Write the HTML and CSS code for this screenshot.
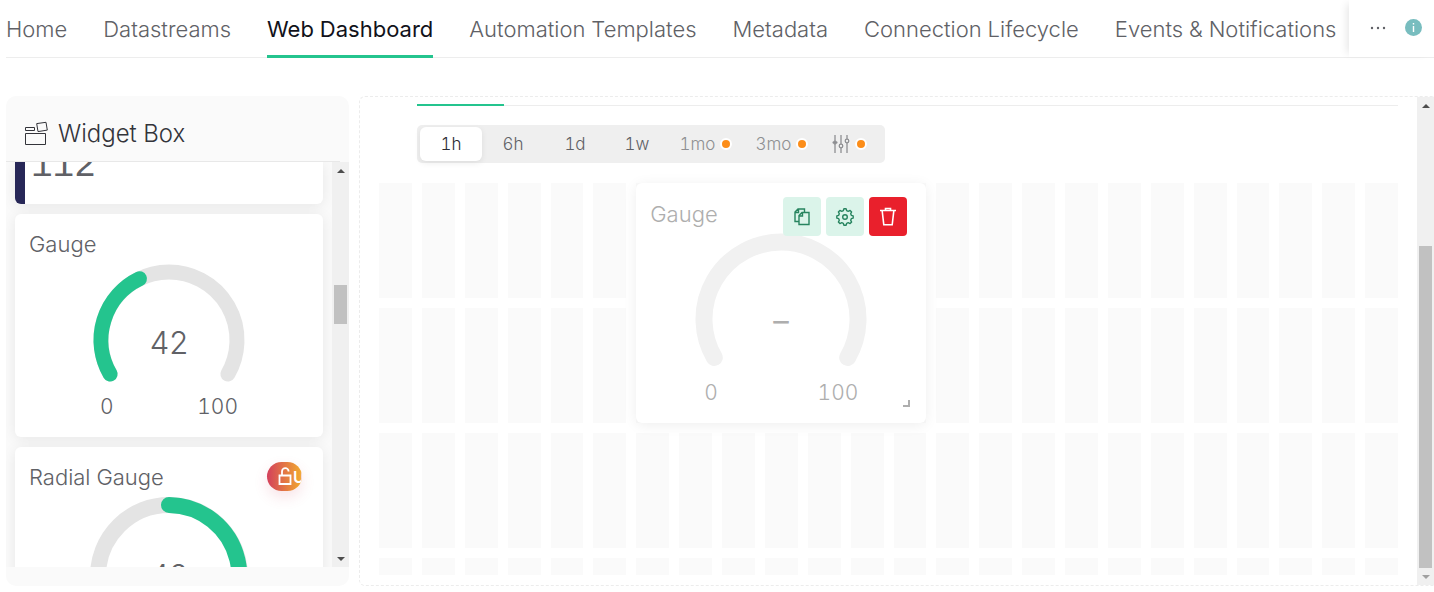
FILE: index.html
```html
<!DOCTYPE html>
<html lang="en">
<head>
<meta charset="utf-8">
<title>Web Dashboard</title>
<link rel="stylesheet" href="styles.css">
</head>
<body>
<div class="page">
  <header class="topbar">
    <nav class="tabs">
      <a class="tab" href="#">Home</a>
      <a class="tab" href="#">Datastreams</a>
      <a class="tab tab-active" href="#">Web Dashboard</a>
      <a class="tab" href="#">Automation Templates</a>
      <a class="tab" href="#">Metadata</a>
      <a class="tab" href="#">Connection Lifecycle</a>
      <a class="tab" href="#">Events &amp; Notifications</a>
    </nav>
    <div class="topbar-extra">
      <button class="icon-button" type="button" aria-label="More tabs">
        <svg width="16" height="4" viewBox="0 0 16 4" fill="#606166"><circle cx="2" cy="2" r="1.2"/><circle cx="8" cy="2" r="1.2"/><circle cx="14" cy="2" r="1.2"/></svg>
      </button>
      <button class="icon-button" type="button" aria-label="Information">
        <svg width="17" height="17" viewBox="0 0 17 17"><circle cx="8.5" cy="8.5" r="8.5" fill="#78bdbf"/><path d="M8.5 7v6M8.5 4v1.6" stroke="#fff" stroke-width="1.4"/></svg>
      </button>
    </div>
  </header>

  <main class="workspace">
    <aside class="sidebar">
      <div class="sidebar-head">
        <svg width="25" height="24" viewBox="0 0 25 24" fill="none" stroke="#33343a" stroke-width="1"><path d="M1.5 12.5h20v11h-20zM1.5 6.500h9v3h-9zM12.7 2.6l9.3-1.3 1.3 7.800-9.300 1.500z"/></svg>
        <h2 class="sidebar-title">Widget Box</h2>
      </div>
      <div class="sidebar-body">
        <div class="widget-list">
          <section class="card card-number"><span class="number">112</span></section>
          <section class="card card-gauge">
            <h3 class="card-title">Gauge</h3>
            <svg class="dial" width="160" height="130" viewBox="0 0 160 130" fill="none" stroke-width="15" stroke-linecap="round">
              <path d="M21.1 114a68 68 0 1 1 117.8 0" stroke="#e4e4e4"/>
              <path d="M21.1 114A68 68 0 0 1 50.5 18.7" stroke="#24c48e"/>
              <text class="dial-value" x="80" y="94" text-anchor="middle">42</text>
            </svg>
            <div class="range"><span>0</span><span>100</span></div>
          </section>
          <section class="card card-radial">
            <h3 class="card-title">Radial Gauge</h3>
            <span class="upgrade">
              <svg width="15" height="20" viewBox="0 0 15 20" fill="none" stroke="#fff" stroke-width="1.8"><path d="M1.500 8.500h11v8.500h-11zM4 8.500V4.500a3.300 3.300 0 0 1 6.600 0"/></svg>
              <span>Upgrade</span>
            </span>
            <svg class="dial" width="160" height="160" viewBox="0 0 160 160" fill="none" stroke-width="16" stroke-linecap="round">
              <circle cx="80" cy="80" r="71" stroke="#e4e4e4"/>
              <path d="M80 9a71 71 0 0 1 32 134" stroke="#24c48e"/>
              <text class="dial-value" x="80" y="91" text-anchor="middle">42</text>
            </svg>
          </section>
        </div>
        <div class="scrollbar">
          <span class="arrow arrow-up"></span>
          <div class="track track-list"><span class="thumb"></span></div>
          <span class="arrow arrow-down"></span>
        </div>
      </div>
    </aside>

    <section class="board">
      <div class="board-body">
        <div class="board-tabs"><span class="board-tab"></span></div>
        <div class="periods">
          <button class="period period-active" type="button">1h</button>
          <button class="period" type="button">6h</button>
          <button class="period" type="button">1d</button>
          <button class="period" type="button">1w</button>
          <button class="period period-locked" type="button">1mo<span class="dot"></span></button>
          <button class="period period-locked" type="button">3mo<span class="dot"></span></button>
          <button class="period period-locked period-custom" type="button" aria-label="Custom range">
            <svg width="18" height="18" viewBox="0 0 18 18" fill="none" stroke="#8e8f92" stroke-width="1.3"><path d="M3 0v6M3 9v9M9 0v9M9 13v5M15 0v4M15 8v10M.5 7.500h5"/><circle cx="3" cy="7.500" r="1.300"/><circle cx="9" cy="11" r="1.800"/><circle cx="15" cy="6" r="1.800"/></svg>
            <span class="dot"></span>
          </button>
        </div>
        <div class="grid" id="grid">
          <section class="widget">
            <div class="widget-head">
              <h3 class="widget-title">Gauge</h3>
              <div class="actions">
                <button class="action" type="button" aria-label="Duplicate">
                  <svg width="18" height="20" viewBox="0 0 18 20" fill="none" stroke="#27845f" stroke-width="1.4"><path d="M9 5.500h7v12H6V8.500zM9.500 5.500v3.500H6M6 14.500H2V5l3-3h6.500v3.500M5.500 2v3.500H2"/></svg>
                </button>
                <button class="action" type="button" aria-label="Settings">
                  <svg width="20" height="20" viewBox="0 0 20 20" fill="none" stroke="#27845f" stroke-width="1.4" stroke-linejoin="round"><path d="M8.300 3.700 8.900 1.800h2.200l.6 1.900 1.500.6 1.900-.9 1.500 1.500-.9 1.900.6 1.500 1.900.6v2.200l-1.900.6-.6 1.500.9 1.900-1.500 1.500-1.900-.9-1.500.6-.6 1.900H8.900l-.6-1.900-1.500-.6-1.900.9-1.500-1.500.9-1.900-.6-1.500-1.900-.6V8.900l1.900-.6.6-1.500-.9-1.900 1.500-1.500 1.900.9z"/><circle cx="10" cy="10" r="2.300"/></svg>
                </button>
                <button class="action action-delete" type="button" aria-label="Delete">
                  <svg width="18" height="20" viewBox="0 0 18 20" fill="none" stroke="#fff" stroke-width="1.6"><path d="M1 3.500h16M6.500 3V1.500h5V3M3.200 4l1.600 13.800h8.400L14.800 4"/></svg>
                </button>
              </div>
            </div>
            <svg class="dial" width="180" height="140" viewBox="0 0 180 140" fill="none" stroke-width="17" stroke-linecap="round">
              <path d="M23.300 128.500a77 77 0 1 1 133.400 0" stroke="#f1f1f1"/>
              <text class="dial-empty" x="90" y="103" text-anchor="middle">–</text>
            </svg>
            <div class="range range-muted"><span>0</span><span>100</span></div>
            <span class="resize"></span>
          </section>
        </div>
      </div>
      <div class="scrollbar">
        <span class="arrow arrow-up"></span>
        <div class="track track-board"><span class="thumb"></span></div>
        <span class="arrow arrow-down arrow-muted"></span>
      </div>
    </section>
  </main>
</div>
<script src="grid.js"></script>
</body>
</html>
```
FILE: grid.js
```js
// Fills the board with placeholder cells behind the widgets.
const grid = document.getElementById("grid");
for (let row = 4; row >= 1; row--) {
  for (let column = 24; column >= 1; column--) {
    const cell = document.createElement("div");
    cell.className = "cell";
    cell.style.gridArea = row + " / " + column;
    grid.prepend(cell);
  }
}
```
FILE: styles.css
```css
* { box-sizing: border-box; }
body { margin: 0; background: #fff; color: #606166; font-family: Inter, "Liberation Sans", sans-serif; font-size: 21px; font-weight: 300; font-variant-numeric: tabular-nums; }
h2, h3 { margin: 0; font-weight: 300; }
button { margin: 0; padding: 0; border: 0; background: none; color: inherit; font: inherit; }
svg { display: block; flex: none; }
.page { display: flex; flex-direction: column; height: 100vh; min-height: 560px; padding: 0 0 6px 6px; }

.topbar { display: flex; height: 58px; border-bottom: 1px solid #ededed; }
.tabs { display: flex; flex: 1; gap: 36px; min-width: 0; font-size: 22px; }
.tab { height: 58px; line-height: 58px; color: inherit; text-decoration: none; white-space: nowrap; }
.tab-active { color: #11121a; font-weight: 400; border-bottom: 3px solid #24c48e; }
.topbar-extra { display: flex; align-items: center; gap: 19px; height: 57px; padding: 0 12px 2px 21px; background: #fff; box-shadow: -6px 0 8px -4px #0000001a; }

.workspace { display: flex; flex: 1; gap: 10px; min-height: 0; padding-top: 38px; }
.sidebar { display: flex; flex-direction: column; flex: none; width: 343px; padding-bottom: 19px; border-radius: 10px; background: #fafafa; }
.sidebar-head { display: flex; align-items: center; gap: 9px; height: 66px; margin-right: 9px; padding: 8px 0 0 18px; border-bottom: 1px solid #e8e8e8; color: #33343a; }
.sidebar-title { padding-top: 2px; font-size: 24px; line-height: 28px; }
.sidebar-body { display: flex; flex: 1; min-height: 0; }
.widget-list { display: flex; flex-direction: column; flex: 1; gap: 10px; padding: 0 9px; overflow: hidden; }
.card { position: relative; display: flex; flex-direction: column; align-items: center; flex: none; border-radius: 6px; background: #fff; box-shadow: 0 2px 14px #00000014; }
.card-number { align-items: flex-start; justify-content: flex-end; height: 42px; padding: 0 0 15px 6px; border-left: 10px solid #272757; border-radius: 0 0 6px 6px; overflow: hidden; }
.number { font: 400 36px/44px "Liberation Mono", monospace; }
.card-gauge { height: 223px; }
.card-radial { height: 240px; }
.card-title { align-self: stretch; padding: 16px 14px 0; font-size: 22px; line-height: 28px; }
.dial { overflow: visible; }
.dial-value { fill: #606166; font-size: 31px; font-variant-numeric: normal; stroke: none; }
.dial-empty { fill: #aeaeae; font-size: 31px; font-weight: 400; stroke: none; }
.card-gauge .dial { margin-top: 2px; }
.card-radial .dial { margin-top: 5px; }
.range { display: flex; justify-content: space-between; width: 138px; margin-top: 3px; line-height: 28px; }
.upgrade { position: absolute; top: 15px; right: 21px; display: flex; align-items: center; width: 35px; height: 29px; padding: 0 0 0 11px; border-radius: 15px; overflow: hidden; background: linear-gradient(90deg, #d3405c, #f2ac2e); box-shadow: 0 6px 14px #d3405c26; color: #fff; font-size: 16px; font-weight: 600; }

.scrollbar { display: flex; flex-direction: column; flex: none; width: 17px; background: #f0f0f0; }
.arrow { display: grid; place-items: center; height: 17px; }
.arrow::before { content: ""; border: 4px solid transparent; }
.arrow-up::before { border-top: 0; border-bottom-color: #4d4d4d; }
.arrow-down::before { border-bottom: 0; border-top-color: #4d4d4d; }
.arrow-muted::before { border-top-color: #a0a0a0; }
.track { display: flex; flex-direction: column; flex: 1; padding: 0 2px; }
.thumb { background: #c1c1c1; }
.track-list::before { content: ""; height: 28.5%; }
.track-list .thumb { height: 39px; }
.track-board { justify-content: flex-end; }
.track-board .thumb { height: 71%; }

.board { display: flex; flex: 1; min-width: 0; border: 1px dashed #ececec; border-right: 0; border-radius: 6px 0 0 6px; overflow: hidden; }
.board-body { display: flex; flex-direction: column; flex: 1; min-width: 0; padding: 7px 19px 10px; }
.board-tabs { flex: none; height: 2px; margin-left: 38px; border-bottom: 1px solid #ededed; }
.board-tab { display: block; width: 87px; height: 2px; background: #24c48e; }
.periods { display: flex; align-items: center; align-self: flex-start; flex: none; height: 38px; margin: 19px 0 20px 38px; padding: 0 3px; border-radius: 5px; background: #efefef; }
.period { display: flex; align-items: center; justify-content: center; gap: 5px; width: 62px; height: 34px; border-radius: 6px; font-size: 17px; line-height: 24px; }
.period-active { background: #fff; color: #2b2c33; box-shadow: 0 2px 6px #00000014; }
.period-locked { width: 76px; color: #8e8f92; }
.period-custom { width: 62px; padding-right: 4px; }
.dot { width: 12px; height: 12px; border: 2px solid #fff; border-radius: 50%; background: #fc8d19; }
.grid { display: grid; grid-template-columns: repeat(24, minmax(0, 1fr)); grid-template-rows: repeat(3, 115px) minmax(0, 1fr); gap: 10px; flex: 1; min-height: 0; }
.cell { background: #fafafa; }
.widget { position: relative; grid-area: 1 / 7 / span 2 / span 7; display: flex; flex-direction: column; align-items: center; border-radius: 6px; background: #fff; box-shadow: 0 2px 14px #00000012; }
.widget-head { display: flex; justify-content: space-between; align-self: stretch; height: 46px; padding: 14px 19px 0 14px; }
.widget-title { padding-top: 3px; font-size: 22px; line-height: 28px; color: #aeaeae; }
.actions { position: relative; z-index: 1; display: flex; gap: 5px; }
.action { display: grid; place-items: center; width: 38px; height: 39px; border-radius: 4px; background: #dbf4ea; }
.action-delete { background: #e9202c; }
.range-muted { width: 154px; margin-top: 10px; color: #aeaeae; }
.resize { position: absolute; right: 16px; bottom: 16px; width: 7px; height: 7px; border: solid #aeaeae; border-width: 0 2px 2px 0; }
```
